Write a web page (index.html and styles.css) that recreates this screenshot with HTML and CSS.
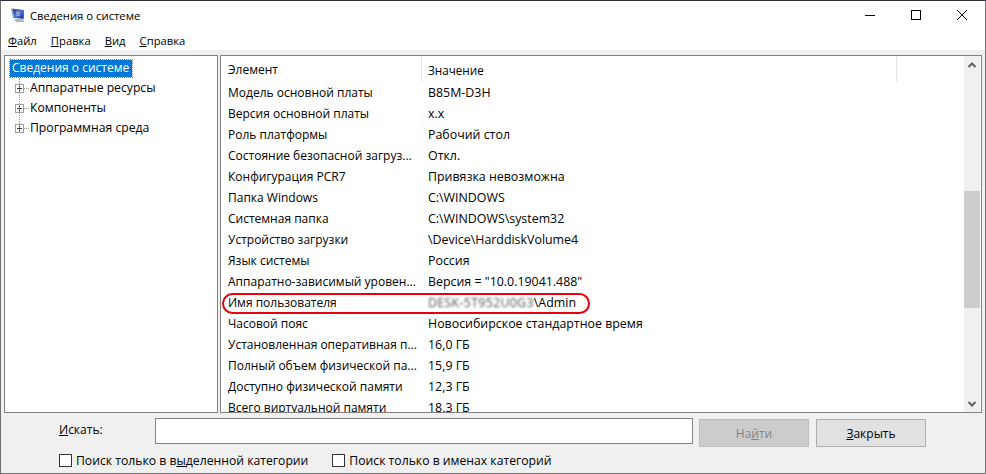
FILE: index.html
```html
<!DOCTYPE html>
<html lang="ru">
<head>
<meta charset="utf-8">
<title>Сведения о системе</title>
<link rel="stylesheet" href="styles.css">
</head>
<body>
<div class="window">
  <header class="titlebar">
    <svg class="appicon" width="16" height="16" viewBox="0 0 16 16">
      <defs><linearGradient id="scr" x1="0" y1="0" x2="1" y2="1"><stop offset="0" stop-color="#2332a6"/><stop offset="0.5" stop-color="#4f79d8"/><stop offset="1" stop-color="#1d2b96"/></linearGradient></defs>
      <path d="M2 1.5l12 1.5v9L4 11z" fill="#5a6a9c"/>
      <path d="M3 2.5l10 1.2v7.6L4.5 10.5z" fill="url(#scr)"/>
      <path d="M6.5 4.5l3 .4v3.8l-3-.3z" fill="#c9dcf6"/>
      <path d="M7.5 5.5h1v2.4h-1z" fill="#23339c"/>
      <path d="M1 2l1-.5 2 9.5-1 .4z" fill="#9aa6cf"/>
      <path d="M4 12h9l1.5 3H6z" fill="#b4b7bc"/>
    </svg>
    <span class="title">Сведения о системе</span>
    <div class="controls">
      <svg class="ctl" width="12" height="12" viewBox="0 0 12 12"><path d="M1 6.5h10" stroke="#000" stroke-width="1" fill="none"/></svg>
      <svg class="ctl" width="12" height="12" viewBox="0 0 12 12"><rect x="1.5" y="1.5" width="9" height="9" stroke="#000" fill="none"/></svg>
      <svg class="ctl" width="12" height="12" viewBox="0 0 12 12"><path d="M1 1l10 10M11 1L1 11" stroke="#000" fill="none"/></svg>
    </div>
  </header>
  <nav class="menubar">
    <span class="menu"><u>Ф</u>айл</span>
    <span class="menu"><u>П</u>равка</span>
    <span class="menu"><u>В</u>ид</span>
    <span class="menu"><u>С</u>правка</span>
  </nav>
  <main class="panes">
    <aside class="tree">
      <div class="node root"><span class="selected">Сведения о системе</span></div>
      <div class="node"><span class="expander"></span><span class="dash"></span><span>Аппаратные ресурсы</span></div>
      <div class="node"><span class="expander"></span><span class="dash"></span><span>Компоненты</span></div>
      <div class="node"><span class="expander"></span><span class="dash"></span><span>Программная среда</span></div>
      <span class="guide"></span>
    </aside>
    <section class="listpane">
      <div class="listbody">
        <div class="row head"><span class="c1">Элемент</span><span class="c2">Значение</span><span class="c3"></span></div>
        <div class="rows">
          <div class="row"><span class="c1">Модель основной платы</span><span class="c2">B85M-D3H</span></div>
          <div class="row"><span class="c1">Версия основной платы</span><span class="c2">x.x</span></div>
          <div class="row"><span class="c1">Роль платформы</span><span class="c2">Рабочий стол</span></div>
          <div class="row"><span class="c1">Состояние безопасной загруз...</span><span class="c2">Откл.</span></div>
          <div class="row"><span class="c1">Конфигурация PCR7</span><span class="c2">Привязка невозможна</span></div>
          <div class="row"><span class="c1">Папка Windows</span><span class="c2">C:\WINDOWS</span></div>
          <div class="row"><span class="c1">Системная папка</span><span class="c2">C:\WINDOWS\system32</span></div>
          <div class="row"><span class="c1">Устройство загрузки</span><span class="c2">\Device\HarddiskVolume4</span></div>
          <div class="row"><span class="c1">Язык системы</span><span class="c2">Россия</span></div>
          <div class="row"><span class="c1">Аппаратно-зависимый уровен...</span><span class="c2">Версия = "10.0.19041.488"</span></div>
          <div class="row"><span class="c1">Имя пользователя</span><span class="c2"><span class="blurred">DESK-5T952U0G3</span>\Admin</span><span class="ring"></span></div>
          <div class="row"><span class="c1">Часовой пояс</span><span class="c2">Новосибирское стандартное время</span></div>
          <div class="row"><span class="c1">Установленная оперативная п...</span><span class="c2">16,0 ГБ</span></div>
          <div class="row"><span class="c1">Полный объем физической па...</span><span class="c2">15,9 ГБ</span></div>
          <div class="row"><span class="c1">Доступно физической памяти</span><span class="c2">12,3 ГБ</span></div>
          <div class="row"><span class="c1">Всего виртуальной памяти</span><span class="c2">18,3 ГБ</span></div>
        </div>
      </div>
      <div class="scrollbar">
        <svg class="arrow" width="16" height="17" viewBox="0 0 16 17"><path d="M4.5 11l3.5-3.5L11.500 11" stroke="#606060" stroke-width="2" fill="none"/></svg>
        <div class="track"><div class="thumb"></div></div>
        <svg class="arrow" width="16" height="17" viewBox="0 0 16 17"><path d="M4.500 7l3.5 3.5L11.500 7" stroke="#606060" stroke-width="2" fill="none"/></svg>
      </div>
    </section>
  </main>
  <footer class="footer">
    <div class="searchrow">
      <label class="searchlabel"><u>И</u>скать:</label>
      <input class="searchinput" type="text">
      <button class="btn disabled">На<u>й</u>ти</button>
      <button class="btn"><u>З</u>акрыть</button>
    </div>
    <div class="checkrow">
      <span class="check"><span class="box"></span>Поиск только в в<u>ы</u>деленной категории</span>
      <span class="check"><span class="box"></span>Поиск только в именах категорий</span>
    </div>
  </footer>
</div>
</body>
</html>
```
FILE: styles.css
```css
* { box-sizing: border-box; }
html, body { margin: 0; height: 100%; }
body { font-family: "Open Sans", "Noto Sans", sans-serif; font-size: 12px; color: #000; background: #f0f0f0; overflow: hidden; }
.window { width: 986px; height: 474px; display: flex; flex-direction: column; background: #f0f0f0; border: 1px solid #707070; border-top-color: #2b2b3a; }
.titlebar { height: 30px; flex: none; background: #fff; display: flex; align-items: center; padding: 0 0 2px 9px; }
.appicon { flex: none; margin-right: 4px; }
.title { flex: 1; font-size: 11.3px; }
.controls { display: flex; }
.ctl { width: 12px; height: 12px; margin: 0 17px; }
.menubar { height: 19px; flex: none; background: #fff; display: flex; padding-left: 7px; gap: 14px; align-items: flex-start; line-height: 20px; font-size: 11.25px; }
.panes { flex: none; height: 358px; margin: 5px 3px 0 3px; display: flex; gap: 2px; }
.tree { width: 214px; flex: none; background: #fff; border: 1px solid #828282; padding: 2px 0 0 5px; position: relative; font-size: 12.2px; }
.node { height: 20px; line-height: 20px; display: flex; align-items: center; white-space: nowrap; padding-left: 5px; }
.node.root { padding-left: 0; font-size: 12px; }
.selected { background: #0078d7; color: #fff; outline: 1px dotted #c08020; padding: 0 2px; height: 17px; line-height: 16px; width: 122px; }
.expander { width: 9px; height: 9px; border: 1px solid #a0a0a0; flex: none; background: linear-gradient(#333,#333) center/5px 1px no-repeat, linear-gradient(#333,#333) center/1px 5px no-repeat, #fff; }
.dash { width: 5px; flex: none; border-top: 1px dotted #999; margin-right: 1px; }
.guide { position: absolute; left: 14px; top: 22px; height: 54px; border-left: 1px dotted #999; }
.listpane { flex: 1; min-width: 0; background: #fff; border: 1px solid #828282; display: flex; overflow: hidden; }
.listbody { flex: 1; min-width: 0; display: flex; flex-direction: column; overflow: hidden; }
.row { height: 21px; flex: none; display: flex; align-items: center; white-space: nowrap; position: relative; }
.head { height: 26px; }
.c1 { width: 200px; padding-left: 7px; flex: none; height: 100%; line-height: 21px; overflow: hidden; }
.c2 { padding-left: 7px; flex: none; line-height: 21px; height: 100%; font-size: 12.4px; }
.head .c1, .head .c2 { line-height: 28px; height: 26px; border-right: 1px solid #e5e5e5; }
.head .c1 { width: 201px; }
.head .c2 { width: 475px; padding-left: 6px; font-size: 11.7px; }
.rows { flex: 1; overflow: hidden; }
.blurred { filter: blur(1.1px); color: #555; display: inline-block; vertical-align: top; letter-spacing: 0.3px; }
.ring { position: absolute; left: 1px; top: 1px; width: 368px; height: 21px; border: 2px solid #e8000d; border-radius: 11px; }
.scrollbar { width: 16px; flex: none; background: #f0f0f0; display: flex; flex-direction: column; margin-right: 1px; }
.arrow { flex: none; display: block; }
.track { flex: 1; min-height: 0; padding-top: 118px; }
.thumb { height: 117px; background: #cdcdcd; }
.footer { flex: 1; min-height: 0; display: flex; flex-direction: column; padding-top: 5px; }
.searchrow { display: flex; align-items: flex-start; height: 28px; padding-left: 58px; }
.searchlabel { width: 96px; flex: none; line-height: 24px; }
.searchinput { width: 538px; height: 26px; flex: none; border: 1px solid #828282; background: #fff; }
.btn { width: 110px; height: 28px; flex: none; margin: 1px 0 0 6px; border: 1px solid #adadad; background: #e1e1e1; font: inherit; color: #000; padding: 0; }
.btn.disabled { background: #cccccc; border-color: #bfbfbf; color: #838383; }
.btn:last-child { margin-left: 7px; }
.checkrow { display: flex; padding-left: 58px; margin-top: 5px; gap: 24px; font-size: 12.2px; }
.check { display: flex; align-items: center; white-space: pre; height: 18px; }
.box { width: 13px; height: 13px; border: 1px solid #333; background: #fff; margin-right: 4px; flex: none; }
```
